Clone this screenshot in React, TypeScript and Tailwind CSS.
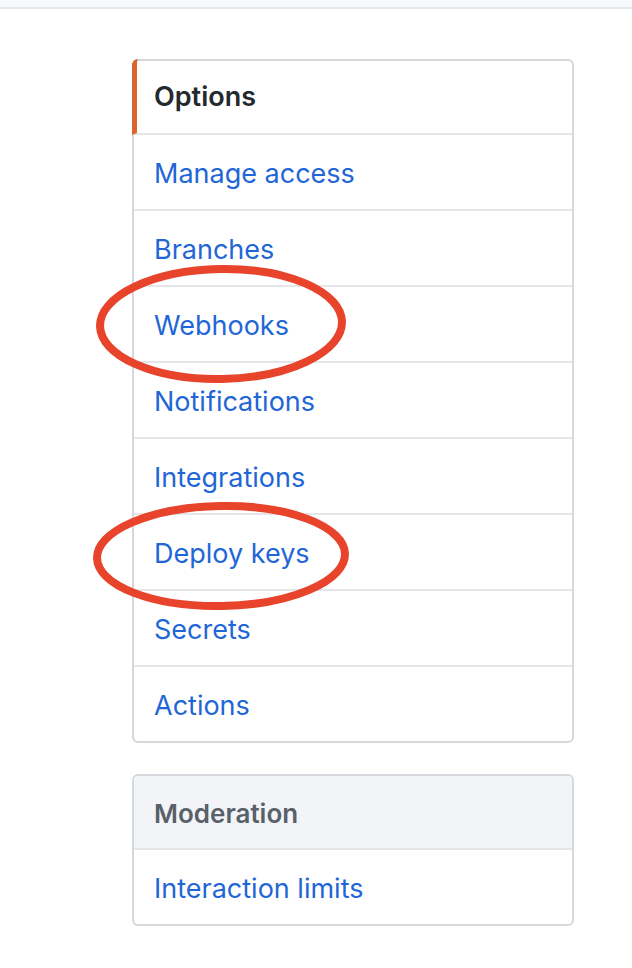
const items = ['Manage access', 'Branches', 'Webhooks', 'Notifications', 'Integrations', 'Deploy keys', 'Secrets', 'Actions'];

export default function App() {
  return (
    <div className="relative w-[632px] h-[968px] bg-white overflow-hidden" style={{ fontFamily: 'Inter, "Liberation Sans", sans-serif' }}>
      <div className="h-[9px] bg-[#f6f8fa] border-b-2 border-[#e4e7eb]" />

      <div className="ml-[132px] mt-[50px] w-[442px]">
        {/* Options menu */}
        <nav className="border-2 border-[#d5d8dc] rounded-[6px]">
          <div className="h-[76px] -mt-[2px] -ml-[2px] flex items-center pt-[3px] pl-[17px] border-l-[5px] border-l-[#d9662e] rounded-tl-[6px] border-b-2 border-b-[#e4e6ea] text-[27px] font-semibold text-[#24292e]">
            Options
          </div>
          {items.map((item, i) => (
            <a
              key={item}
              href="#"
              className={`flex items-center pt-[5px] pl-[20px] text-[27px] text-[#1f66d6] ${i < items.length - 1 ? 'h-[76px] border-b-2 border-[#e4e6ea]' : 'h-[74px]'}`}
            >
              {item}
            </a>
          ))}
        </nav>

        {/* Moderation menu */}
        <nav className="mt-[31px] border-2 border-[#d5d8dc] rounded-[6px]">
          <div className="h-[74px] flex items-center pt-[3px] pl-[20px] bg-[#f3f4f7] rounded-t-[5px] border-b-2 border-[#e4e6ea] text-[26px] font-semibold text-[#586069]">
            Moderation
          </div>
          <a href="#" className="h-[74px] flex items-center pt-[5px] pl-[20px] text-[27px] text-[#1f66d6]">
            Interaction limits
          </a>
        </nav>
      </div>

      {/* annotation circles */}
      <svg className="absolute inset-0 pointer-events-none" width="632" height="968">
        <ellipse cx="221" cy="324" rx="121" ry="55" fill="none" stroke="#e8432b" strokeWidth="8" transform="rotate(-1 221 324)" />
        <ellipse cx="221" cy="556" rx="124" ry="50" fill="none" stroke="#e8432b" strokeWidth="8" transform="rotate(-1 221 556)" />
      </svg>
    </div>
  );
}
